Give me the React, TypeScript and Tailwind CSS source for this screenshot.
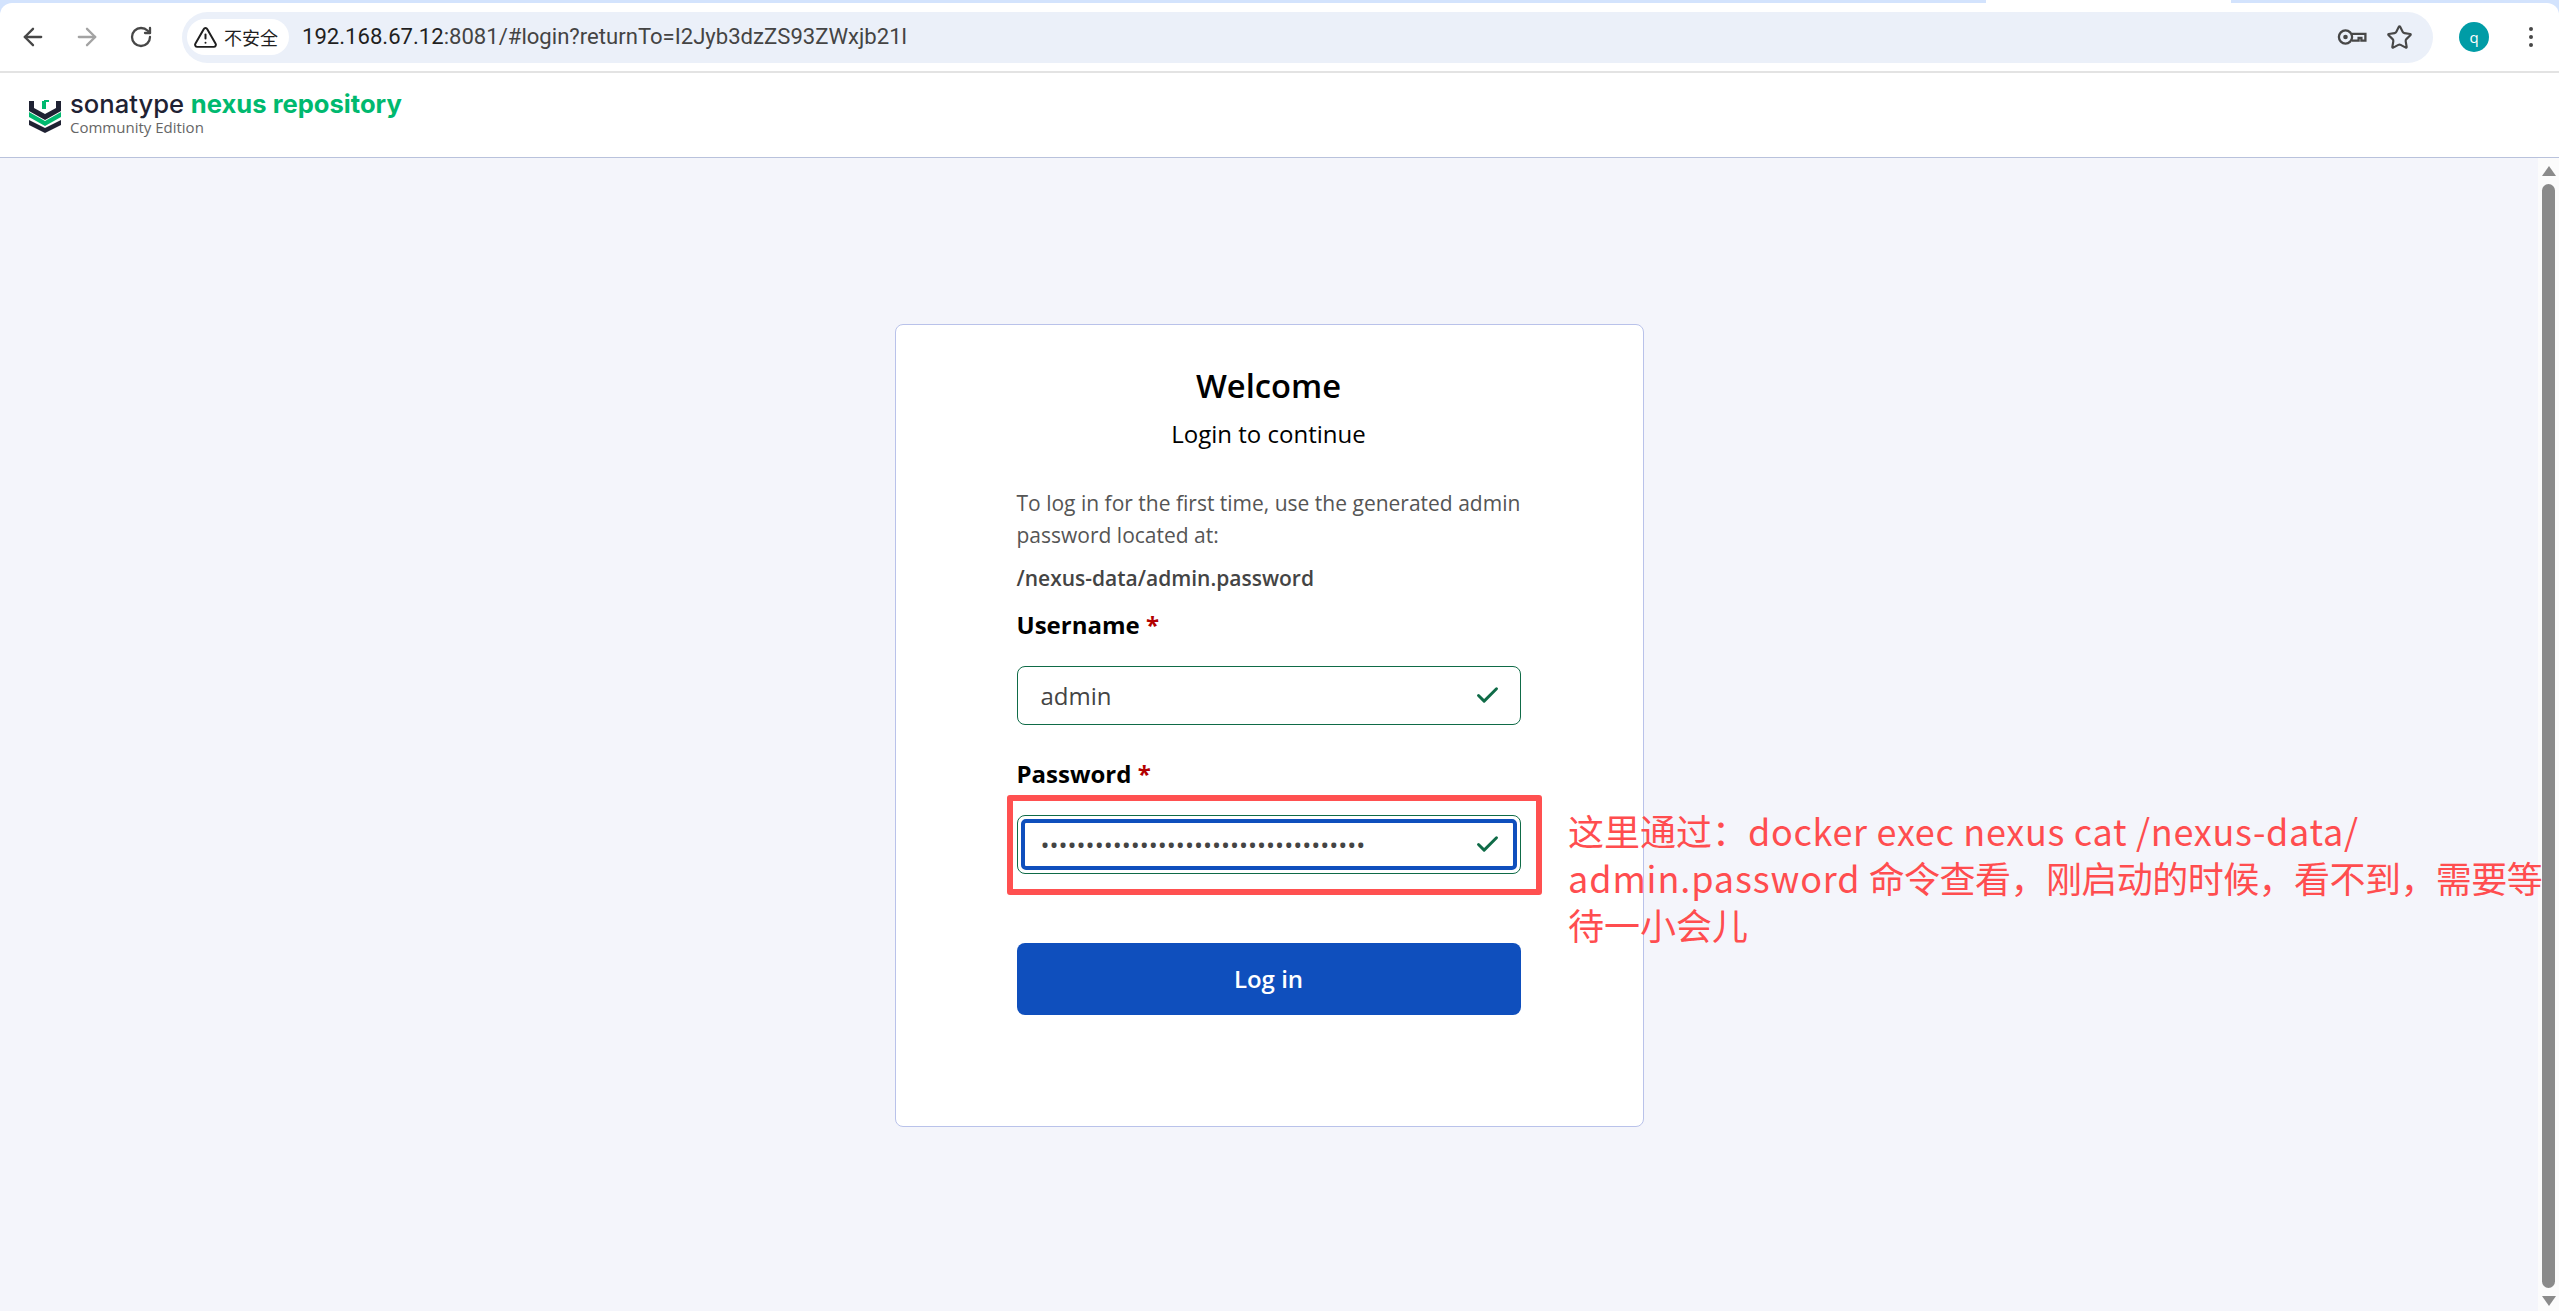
import { ArrowLeft, ArrowRight, Check, RotateCw, Star, TriangleAlert } from 'lucide-react';

function KeyIcon() {
  return (
    <svg width="30" height="30" viewBox="0 0 30 30" fill="none" stroke="#474747" strokeWidth="2.3">
      <circle cx="8.5" cy="15" r="6.6" />
      <circle cx="8.5" cy="15" r="2.3" fill="#474747" stroke="none" />
      <path d="M15 11.8H28.4V18.6H24.4V15.8H21.6V18.6H15" />
    </svg>
  );
}

function Logo() {
  return (
    <svg width="34" height="35" viewBox="0 0 34 35" className="shrink-0">
      <path d="M1 3h5v7l11 6 11-6V3h5v10L17 22 1 13z" fill="#1f2233" />
      <path d="M14 3h2v-1h5v2h-3v7h-4z" fill="#00b96f" />
      <path d="M1 14l16 9 16-9v5l-16 9-16-9z" fill="#00b96f" />
      <path d="M1 22l16 8 16-8v5l-16 8-16-8z" fill="#1f2233" />
    </svg>
  );
}

function Field({ label, value, focused }: { label: string; value: string; focused?: boolean }) {
  return (
    <div>
      <div className="h-[32px] leading-[32px] text-[24px] font-bold text-black">
        {label} <span className="text-[#b30000]">*</span>
      </div>
      <div className="mt-[25px] h-[59px] rounded-lg border border-[#0f6b47] flex items-center relative">
        {focused && <div className="absolute inset-[3px] rounded-[5px] border-[4px] border-[#0f4fbd]" />}
        <span className="pl-[23px] text-[#444] text-[24px] flex-1">{value}</span>
        <Check className="mr-[19px] text-[#0f6b47]" size={27} strokeWidth={2.6} />
      </div>
    </div>
  );
}

export default function App() {
  return (
    <div className="h-[1311px] w-[2559px] overflow-hidden flex flex-col bg-white relative font-['Open_Sans',sans-serif]">
      <div className="shrink-0 bg-[#d3e3fd]">
        <div className="h-[3px] pl-[1986px]">
          <div className="h-[3px] w-[245px] bg-white" />
        </div>
        <div className="h-[70px] flex items-center pl-[6px] pr-[13px] border-b-2 border-[#e3e3e3] rounded-t-[12px] bg-white">
          <div className="flex items-center w-[176px] text-[#474747]">
            <div className="w-[54px] flex justify-center"><ArrowLeft size={28} strokeWidth={2} /></div>
            <div className="w-[54px] flex justify-center"><ArrowRight size={28} strokeWidth={2} className="text-[#a3a3a3]" /></div>
            <div className="w-[54px] flex justify-center"><RotateCw size={24} strokeWidth={2.3} /></div>
          </div>
          <div className="h-[51px] w-[2251px] rounded-full bg-[#ebf0f9] flex items-center pl-[5px] pr-[20px]">
            <div className="h-[36px] w-[102px] rounded-full bg-white flex items-center pl-[6px] gap-[6px] text-[18px] text-[#1f1f1f] font-['Noto_Sans_CJK_SC',sans-serif]">
              <TriangleAlert size={25} strokeWidth={1.9} />
              <span>不安全</span>
            </div>
            <div className="ml-[13px] text-[22.1px] text-[#444] flex-1 font-['Roboto',sans-serif]">
              <span className="text-[#1f1f1f]">192.168.67.12</span>:8081/#login?returnTo=I2Jyb3dzZS93ZWxjb21l
            </div>
            <div className="flex items-center gap-[19px]">
              <KeyIcon />
              <Star size={27} strokeWidth={1.9} className="text-[#474747]" />
            </div>
          </div>
          <div className="ml-[26px] w-[30px] h-[30px] rounded-full bg-[#009ca6] text-white text-[15px] flex items-center justify-center">q</div>
          <div className="ml-[40px] flex flex-col gap-[4px]">
            <div className="w-[4px] h-[4px] rounded-full bg-[#474747]" />
            <div className="w-[4px] h-[4px] rounded-full bg-[#474747]" />
            <div className="w-[4px] h-[4px] rounded-full bg-[#474747]" />
          </div>
        </div>
      </div>
      <div className="h-[85px] shrink-0 flex items-center pl-[28px] gap-[8px] border-b-[1px] border-[#b9c2dc] bg-white">
        <Logo />
        <div className="flex flex-col mb-[7px]">
          <div className="text-[25.6px] leading-[30px] font-medium text-[#1f2233] whitespace-nowrap font-['Inter',sans-serif]">
            sonatype <span className="text-[#00b96f] font-bold">nexus repository</span>
          </div>
          <div className="text-[15px] leading-[16px] text-[#666]">Community Edition</div>
        </div>
      </div>
      <div className="flex-1 flex min-h-0 bg-[#f4f5fb]">
        <div className="flex-1 flex justify-center items-start pt-[166px]">
          <div className="w-[749px] h-[803px] rounded-lg border border-[#b9c2ea] bg-white pl-[121px] pr-[122px] pt-[37px]">
            <div className="text-center text-[32.7px] leading-[48px] font-semibold text-black">Welcome</div>
            <div className="text-center text-[24px] leading-[48px] text-black">Login to continue</div>
            <div className="mt-[29px] text-[21px] leading-[32px] text-[#555]">
              To log in for the first time, use the generated admin password located at:
            </div>
            <div className="mt-[11px] text-[21px] leading-[32px] font-semibold text-[#444]">/nexus-data/admin.password</div>
            <div className="mt-[15px] flex flex-col gap-[33px]">
              <Field label="Username" value="admin" />
              <Field label="Password" value="••••••••••••••••••••••••••••••••••••" focused />
            </div>
            <button className="mt-[69px] h-[72px] w-full rounded-lg bg-[#0f4fbd] text-white text-[24px] font-semibold">Log in</button>
          </div>
        </div>
        <div className="w-[21px] shrink-0 bg-[#fbfbfb] flex flex-col items-center pt-[8px] pb-[5px] gap-[8px]">
          <div className="w-0 h-0 border-x-[7px] border-x-transparent border-b-[10px] border-b-[#8a8a8a]" />
          <div className="w-[13px] flex-1 rounded-full bg-[#8a8a8a]" />
          <div className="w-0 h-0 border-x-[7px] border-x-transparent border-t-[10px] border-t-[#8a8a8a]" />
        </div>
      </div>
      <div className="absolute left-[1007px] top-[795px] w-[535px] h-[100px] rounded-[3px] border-[6px] border-[#ff5050] pointer-events-none" />
      <div className="absolute left-[1568px] top-[807px] text-[36px] leading-[47px] text-[#ff4d4f] whitespace-nowrap font-['Noto_Sans_CJK_SC',sans-serif]">
        <div>这里通过：<span className="tracking-[0.7px]">docker exec nexus cat /nexus-data/</span></div>
        <div><span className="tracking-[0.9px]">admin.password</span> <span className="tracking-[-0.55px]">命令查看，刚启动的时候，看不到，需要等</span></div>
        <div>待一小会儿</div>
      </div>
    </div>
  );
}
